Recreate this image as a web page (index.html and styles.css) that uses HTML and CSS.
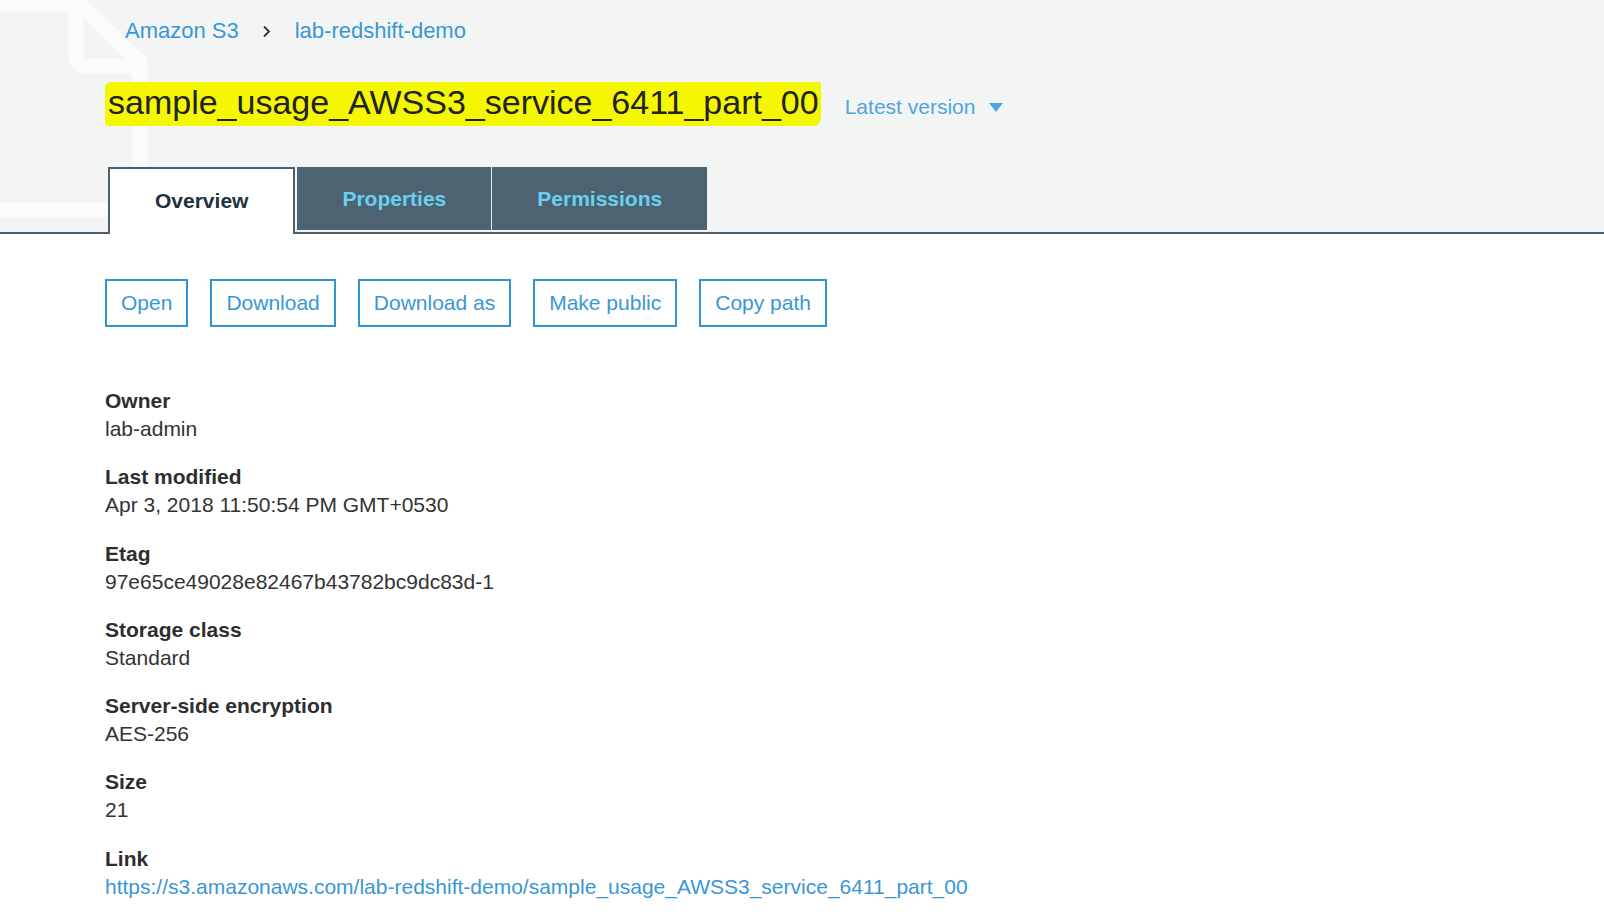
FILE: index.html
```html
<!DOCTYPE html>
<html lang="en">
<head>
<meta charset="utf-8">
<title>sample_usage_AWSS3_service_6411_part_00</title>
<link rel="stylesheet" href="styles.css">
</head>
<body>
<header class="header">
  <svg class="watermark" width="170" height="230" viewBox="0 0 170 230" aria-hidden="true">
    <path d="M-20 4 H80 L140 62 V210 H-20" fill="none" stroke="#fafbfb" stroke-width="15" stroke-linejoin="round"/>
    <path d="M76 -10 V56 Q76 66 86 66 H140" fill="none" stroke="#fafbfb" stroke-width="15" stroke-linejoin="round"/>
  </svg>
  <nav class="breadcrumb">
    <a class="crumb" href="#">Amazon S3</a>
    <svg class="chev" width="9" height="13" viewBox="0 0 9 13" aria-hidden="true"><path d="M2 1.5 L7 6.5 L2 11.5" fill="none" stroke="#333" stroke-width="1.8"/></svg>
    <a class="crumb" href="#">lab-redshift-demo</a>
  </nav>
  <div class="title-row">
    <h1 class="title"><span class="hl">sample_usage_AWSS3_service_6411_part_00</span></h1>
    <a class="version" href="#">Latest version <svg class="caret" width="14" height="9" viewBox="0 0 14 9" aria-hidden="true"><path d="M0 0 H14 L7 9 Z" fill="#4ea6e0"/></svg></a>
  </div>
  <div class="tabs">
    <div class="tab active">Overview</div>
    <div class="tab dark">Properties</div>
    <div class="tab dark sep">Permissions</div>
  </div>
</header>
<main class="content">
  <div class="actions">
    <button class="btn">Open</button>
    <button class="btn">Download</button>
    <button class="btn">Download as</button>
    <button class="btn">Make public</button>
    <button class="btn">Copy path</button>
  </div>
  <dl class="details">
    <div class="item"><dt>Owner</dt><dd>lab-admin</dd></div>
    <div class="item"><dt>Last modified</dt><dd>Apr 3, 2018 11:50:54 PM GMT+0530</dd></div>
    <div class="item"><dt>Etag</dt><dd>97e65ce49028e82467b43782bc9dc83d-1</dd></div>
    <div class="item"><dt>Storage class</dt><dd>Standard</dd></div>
    <div class="item"><dt>Server-side encryption</dt><dd>AES-256</dd></div>
    <div class="item"><dt>Size</dt><dd>21</dd></div>
    <div class="item"><dt>Link</dt><dd><a class="link" href="#">https://s3.amazonaws.com/lab-redshift-demo/sample_usage_AWSS3_service_6411_part_00</a></dd></div>
  </dl>
</main>
</body>
</html>
```
FILE: styles.css
```css
* { box-sizing: border-box; }
html, body { margin: 0; padding: 0; }
body {
  font-family: "Liberation Sans", Arial, sans-serif;
  color: #333;
  background: #fff;
  width: 1604px;
  height: 916px;
  overflow: hidden;
}
.header {
  position: relative;
  background: #f3f4f4;
  padding-top: 18px;
}
.watermark {
  position: absolute;
  left: 0;
  top: 0;
  z-index: 0;
}
.breadcrumb, .title-row, .tabs { position: relative; z-index: 1; }
.breadcrumb {
  display: flex;
  align-items: center;
  padding-left: 125px;
  height: 26px;
  font-size: 22px;
  line-height: 26px;
}
.crumb { color: #3a97d5; text-decoration: none; }
.chev { margin: 0 24px 0 23px; }
.title-row {
  display: flex;
  align-items: baseline;
  padding-left: 105px;
  margin-top: 38px;
}
.title {
  margin: 0;
  font-size: 34px;
  font-weight: normal;
  line-height: 40px;
  color: #222;
}
.hl {
  background: #f4f700;
  padding: 1px 2px 5px 3px;
  border-radius: 6px 2px 8px 3px;
}
.version {
  margin-left: 24px;
  font-size: 21px;
  color: #4ea6e0;
  text-decoration: none;
}
.caret { margin-left: 8px; vertical-align: 2px; }
.tabs {
  display: flex;
  align-items: flex-end;
  padding-left: 108px;
  margin-top: 45px;
  border-bottom: 2px solid #4a5f6d;
}
.tab {
  display: flex;
  align-items: center;
  justify-content: center;
  padding: 0 45px;
  font-size: 21px;
  font-weight: bold;
}
.tab.active {
  height: 67px;
  margin-bottom: -2px;
  background: #fff;
  border: 2px solid #4a5f6d;
  border-bottom: none;
  color: #232f3e;
  padding-bottom: 2px;
}
.tab.dark {
  height: 63px;
  margin-bottom: 2px;
  margin-left: 2px;
  background: #4d6371;
  color: #6ad0f2;
}
.tab.sep {
  margin-left: 0;
  border-left: 1px solid #dfe5e8;
}
.content {
  padding-left: 105px;
}
.actions {
  display: flex;
  gap: 22px;
  margin-top: 45px;
}
.btn {
  height: 48px;
  padding: 0 14px;
  border: 2px solid #2f93d4;
  background: #fff;
  color: #3a97d5;
  font-family: "Liberation Sans", Arial, sans-serif;
  font-size: 21px;
  line-height: 44px;
  cursor: pointer;
}
.details {
  margin: 60px 0 0;
}
.item {
  margin-bottom: 20.3px;
  font-size: 21px;
  line-height: 28px;
}
.item dt {
  font-weight: bold;
  color: #2e2e2e;
}
.item dd {
  margin: 0;
  color: #333;
}
.link {
  color: #3a97d5;
  text-decoration: none;
}
```
